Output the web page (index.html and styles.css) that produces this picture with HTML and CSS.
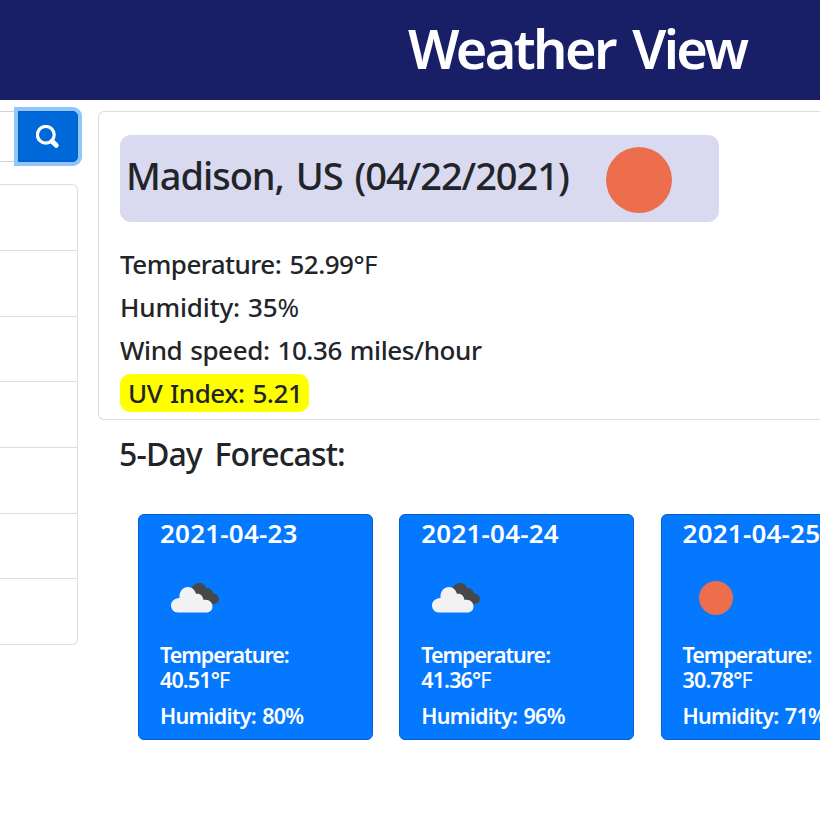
FILE: index.html
```html
<!DOCTYPE html>
<html lang="en">
<head>
<meta charset="utf-8">
<title>Weather View</title>
<link rel="stylesheet" href="styles.css">
</head>
<body>
<svg class="defs" width="0" height="0" aria-hidden="true">
  <symbol id="clouds" viewBox="0 0 50 32">
    <path fill="#484848" d="M21 8C22 3 26 1 29 1c4 0 6 2 7 5 4 0 6 2 7 5 4 1 6 4 6 6 0 3-3 5-6 5H30z"/>
    <path fill="#f2f2f2" d="M8 30.500C3.500 30.500 1 27 1 23.500c0-4 3-7 8.500-7.500C9 9 13 5 18 5c4 0 7 3 8 7 4-1 7 2 7.500 6 5-1 9 2 9 6.500 0 3.500-2.500 6-6 6z"/>
  </symbol>
</svg>
<header class="banner"><h1 class="title">Weather View</h1></header>
<main class="layout">
  <aside class="sidebar">
    <form class="search">
      <div class="field"></div>
      <button class="go" type="button" aria-label="Search">
        <svg width="24" height="24" viewBox="0 0 24 24" fill="none" stroke="#fff" stroke-linecap="round"><circle cx="9.800" cy="9.800" r="8.400" stroke-width="3.200"/><path d="M16 16.300l4.200 4" stroke-width="5"/></svg>
      </button>
    </form>
    <ul class="history"><li></li><li></li><li></li><li></li><li></li><li></li><li></li></ul>
  </aside>
  <div class="content">
    <section class="current">
      <div class="city"><h2 class="name">Madison, US (04/22/2021)</h2><span class="sun"></span></div>
      <p class="stat temp">Temperature: 52.99°<span class="thin">F</span></p>
      <p class="stat humidity">Humidity: 35<span class="thin">%</span></p>
      <p class="stat wind">Wind speed: 10.36 miles/hour</p>
      <p class="uv"><span class="uvtext">UV Index: 5.21</span></p>
    </section>
    <h3 class="heading">5-Day Forecast:</h3>
    <section class="forecast">
      <article class="day">
        <h4 class="date">2021-04-23</h4>
        <div class="icon"><svg width="50" height="32"><use href="#clouds"/></svg></div>
        <div class="line label">Temperature:</div>
        <div class="line value">40.51°<span class="thin">F</span></div>
        <div class="line hum">Humidity: 80%</div>
      </article>
      <article class="day">
        <h4 class="date">2021-04-24</h4>
        <div class="icon"><svg width="50" height="32"><use href="#clouds"/></svg></div>
        <div class="line label">Temperature:</div>
        <div class="line value">41.36°<span class="thin">F</span></div>
        <div class="line hum">Humidity: 96%</div>
      </article>
      <article class="day">
        <h4 class="date">2021-04-25</h4>
        <div class="icon"><span class="sun small"></span></div>
        <div class="line label">Temperature:</div>
        <div class="line value">30.78°<span class="thin">F</span></div>
        <div class="line hum">Humidity: 71%</div>
      </article>
    </section>
  </div>
</main>
</body>
</html>
```
FILE: styles.css
```css
* { box-sizing: border-box; }
body { margin: 0; height: 820px; overflow: hidden; background: #fff; color: #212529; font-family: "Noto Sans", "Open Sans", sans-serif; font-weight: 500; }
h1, h2, h3, h4, p, ul { margin: 0; padding: 0; font-weight: 500; }
.defs { display: block; }
.banner { height: 100px; background: #191f67; padding-left: 408px; }
.title { font-size: 54px; line-height: 96px; font-weight: 600; color: #fff; white-space: nowrap; letter-spacing: -2.600px; word-spacing: 6px; }
.layout { display: flex; padding-top: 11px; }
.sidebar { width: 78px; flex: none; }
.search { display: flex; height: 51px; }
.field { width: 18px; border: solid #ced4da; border-width: 1px 0; }
.go { width: 60px; padding: 0; display: flex; align-items: center; justify-content: center; border: 1px solid #0062cc; background: #0069d9; border-radius: 0 5px 5px 0; box-shadow: 0 0 0 4px #94c5fa; }
.history { list-style: none; margin-top: 22px; border: 1px solid #dcdddf; border-left: 0; border-radius: 0 6px 6px 0; height: 461px; display: grid; grid-template-rows: 65px repeat(6, 1fr); }
.history li + li { border-top: 1px solid #dcdddf; }
.content { width: 722px; flex: none; margin-left: 20px; overflow: hidden; height: 709px; }
.current { height: 309px; border: 1px solid #dcdddf; border-right: 0; border-radius: 6px 0 0 6px; padding: 23px 21px 0; }
.city { width: 599px; height: 87px; border-radius: 11px; background: #d9d9f0; display: flex; justify-content: space-between; padding: 0 47px 0 6px; margin-bottom: 21px; }
.name { font-size: 38px; line-height: 80px; white-space: nowrap; letter-spacing: -1.050px; word-spacing: 3px; }
.sun { display: block; flex: none; width: 66px; height: 66px; margin-top: 12px; border-radius: 50%; background: #ec6e4c; }
.stat { font-size: 26px; line-height: 43px; }
.temp { letter-spacing: -0.520px; word-spacing: 2px; }
.humidity { letter-spacing: -0.150px; word-spacing: 1.500px; }
.wind { letter-spacing: -0.400px; word-spacing: 1.500px; }
.thin { font-weight: 400; }
.uv { display: flex; margin-top: 2px; }
.uvtext { background: #ff0; border-radius: 10px; width: 189px; padding-left: 8px; font-size: 26px; line-height: 38px; white-space: nowrap; letter-spacing: -0.450px; word-spacing: 1.500px; }
.heading { font-size: 32px; line-height: 40px; padding-left: 21px; margin-top: 14px; letter-spacing: -0.850px; word-spacing: 5px; }
.forecast { display: flex; gap: 26.300px; padding: 40px 0 0 40px; }
.day { width: 235px; flex: none; height: 226px; border: 1px solid #0062cc; border-radius: 6px; background: #0478ff; color: #fff; padding-left: 21px; }
.date { font-size: 26px; line-height: 36px; font-weight: 600; letter-spacing: 0.200px; }
.icon { height: 91px; display: flex; align-items: center; padding: 2px 0 0 10px; }
.icon .small { width: 34px; height: 34px; margin: 0 0 0 6px; }
.line { font-size: 21.500px; line-height: 25px; white-space: nowrap; font-weight: 600; }
.line .thin { font-weight: 400; }
.label { letter-spacing: -1.050px; }
.value { letter-spacing: -0.900px; }
.hum { margin-top: 11px; letter-spacing: -0.750px; word-spacing: 1.500px; }
```
